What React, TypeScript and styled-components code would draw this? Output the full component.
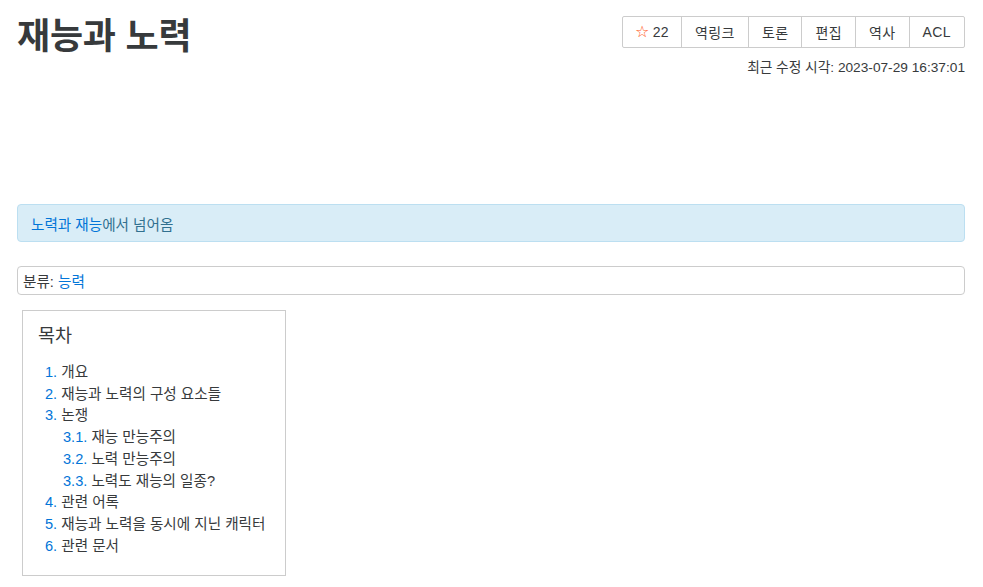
import React from "react";
import styled, { createGlobalStyle } from "styled-components";

const Global = createGlobalStyle`
  html, body { margin: 0; padding: 0; background: #fff; }
  body {
    font-family: "Liberation Sans", "Noto Sans CJK KR", sans-serif;
    color: #373a3c;
    font-size: 14px;
  }
  a { text-decoration: none; color: #0275d8; }
`;

const Page = styled.div`
  padding: 16px 18px 0 17px;
`;

const Header = styled.div`
  display: flex;
  justify-content: space-between;
  align-items: flex-start;
`;

const Title = styled.h1`
  margin: 0;
  font-size: 36px;
  font-weight: bold;
  line-height: 42px;
  letter-spacing: -0.2px;
`;

const RightCol = styled.div`
  display: flex;
  flex-direction: column;
  align-items: flex-end;
`;

const ButtonGroup = styled.div`
  display: flex;
  border: 1px solid #ccc;
  border-radius: 2px;
`;

const Btn = styled.a<{ $first?: boolean }>`
  display: flex;
  align-items: center;
  gap: 3px;
  height: 30px;
  padding: 0 ${(p) => (p.$first ? 12 : 13)}px;
  color: #373a3c;
  font-size: 14px;
  letter-spacing: 0.4px;
  border-left: ${(p) => (p.$first ? "none" : "1px solid #ccc")};
`;

const Star = styled.span`
  color: #ff5722;
  font-family: "DejaVu Sans", sans-serif;
  font-size: 16px;
  line-height: 1;
`;

const Updated = styled.div`
  margin-top: 11px;
  font-size: 13.7px;
  line-height: 18px;
`;

const Spacer = styled.div`
  height: 127px;
`;

const Alert = styled.div`
  background: #d9edf7;
  border: 1px solid #bcdff1;
  border-radius: 4px;
  color: #31708f;
  padding: 0 13px;
  height: 36px;
  display: flex;
  align-items: center;
  font-size: 14.6px;
  white-space: pre;
`;

const Category = styled.div`
  margin-top: 24px;
  border: 1px solid #ccc;
  border-radius: 4px;
  height: 27px;
  padding: 0 5px;
  display: flex;
  align-items: center;
  font-size: 14.6px;
  white-space: pre;
`;

const Toc = styled.div`
  margin: 15px 0 0 5px;
  width: 232px;
  border: 1px solid #ccc;
  padding: 13px 15px 18px 15px;
`;

const TocTitle = styled.div`
  font-size: 18.5px;
  line-height: 24px;
  margin-bottom: 14px;
`;

const TocList = styled.div`
  display: flex;
  flex-direction: column;
`;

const TocItem = styled.div<{ $depth: number }>`
  padding-left: ${(p) => 7 + p.$depth * 18}px;
  font-size: 14.6px;
  line-height: 21.7px;
  white-space: pre;
`;

const Num = styled.a`
  color: #0275d8;
`;

const items: [string, string, number][] = [
  ["1.", "개요", 0],
  ["2.", "재능과 노력의 구성 요소들", 0],
  ["3.", "논쟁", 0],
  ["3.1.", "재능 만능주의", 1],
  ["3.2.", "노력 만능주의", 1],
  ["3.3.", "노력도 재능의 일종?", 1],
  ["4.", "관련 어록", 0],
  ["5.", "재능과 노력을 동시에 지닌 캐릭터", 0],
  ["6.", "관련 문서", 0],
];

export default function App() {
  return (
    <Page>
      <Global />
      <Header>
        <Title>재능과 노력</Title>
        <RightCol>
          <ButtonGroup>
            <Btn $first>
              <Star>☆</Star>22
            </Btn>
            <Btn>역링크</Btn>
            <Btn>토론</Btn>
            <Btn>편집</Btn>
            <Btn>역사</Btn>
            <Btn>ACL</Btn>
          </ButtonGroup>
          <Updated>최근 수정 시각: 2023-07-29 16:37:01</Updated>
        </RightCol>
      </Header>
      <Spacer />
      <Alert>
        <a>노력과 재능</a>에서 넘어옴
      </Alert>
      <Category>
        분류: <a>능력</a>
      </Category>
      <Toc>
        <TocTitle>목차</TocTitle>
        <TocList>
          {items.map(([n, t, d]) => (
            <TocItem key={n} $depth={d}>
              <Num>{n}</Num> {t}
            </TocItem>
          ))}
        </TocList>
      </Toc>
    </Page>
  );
}
